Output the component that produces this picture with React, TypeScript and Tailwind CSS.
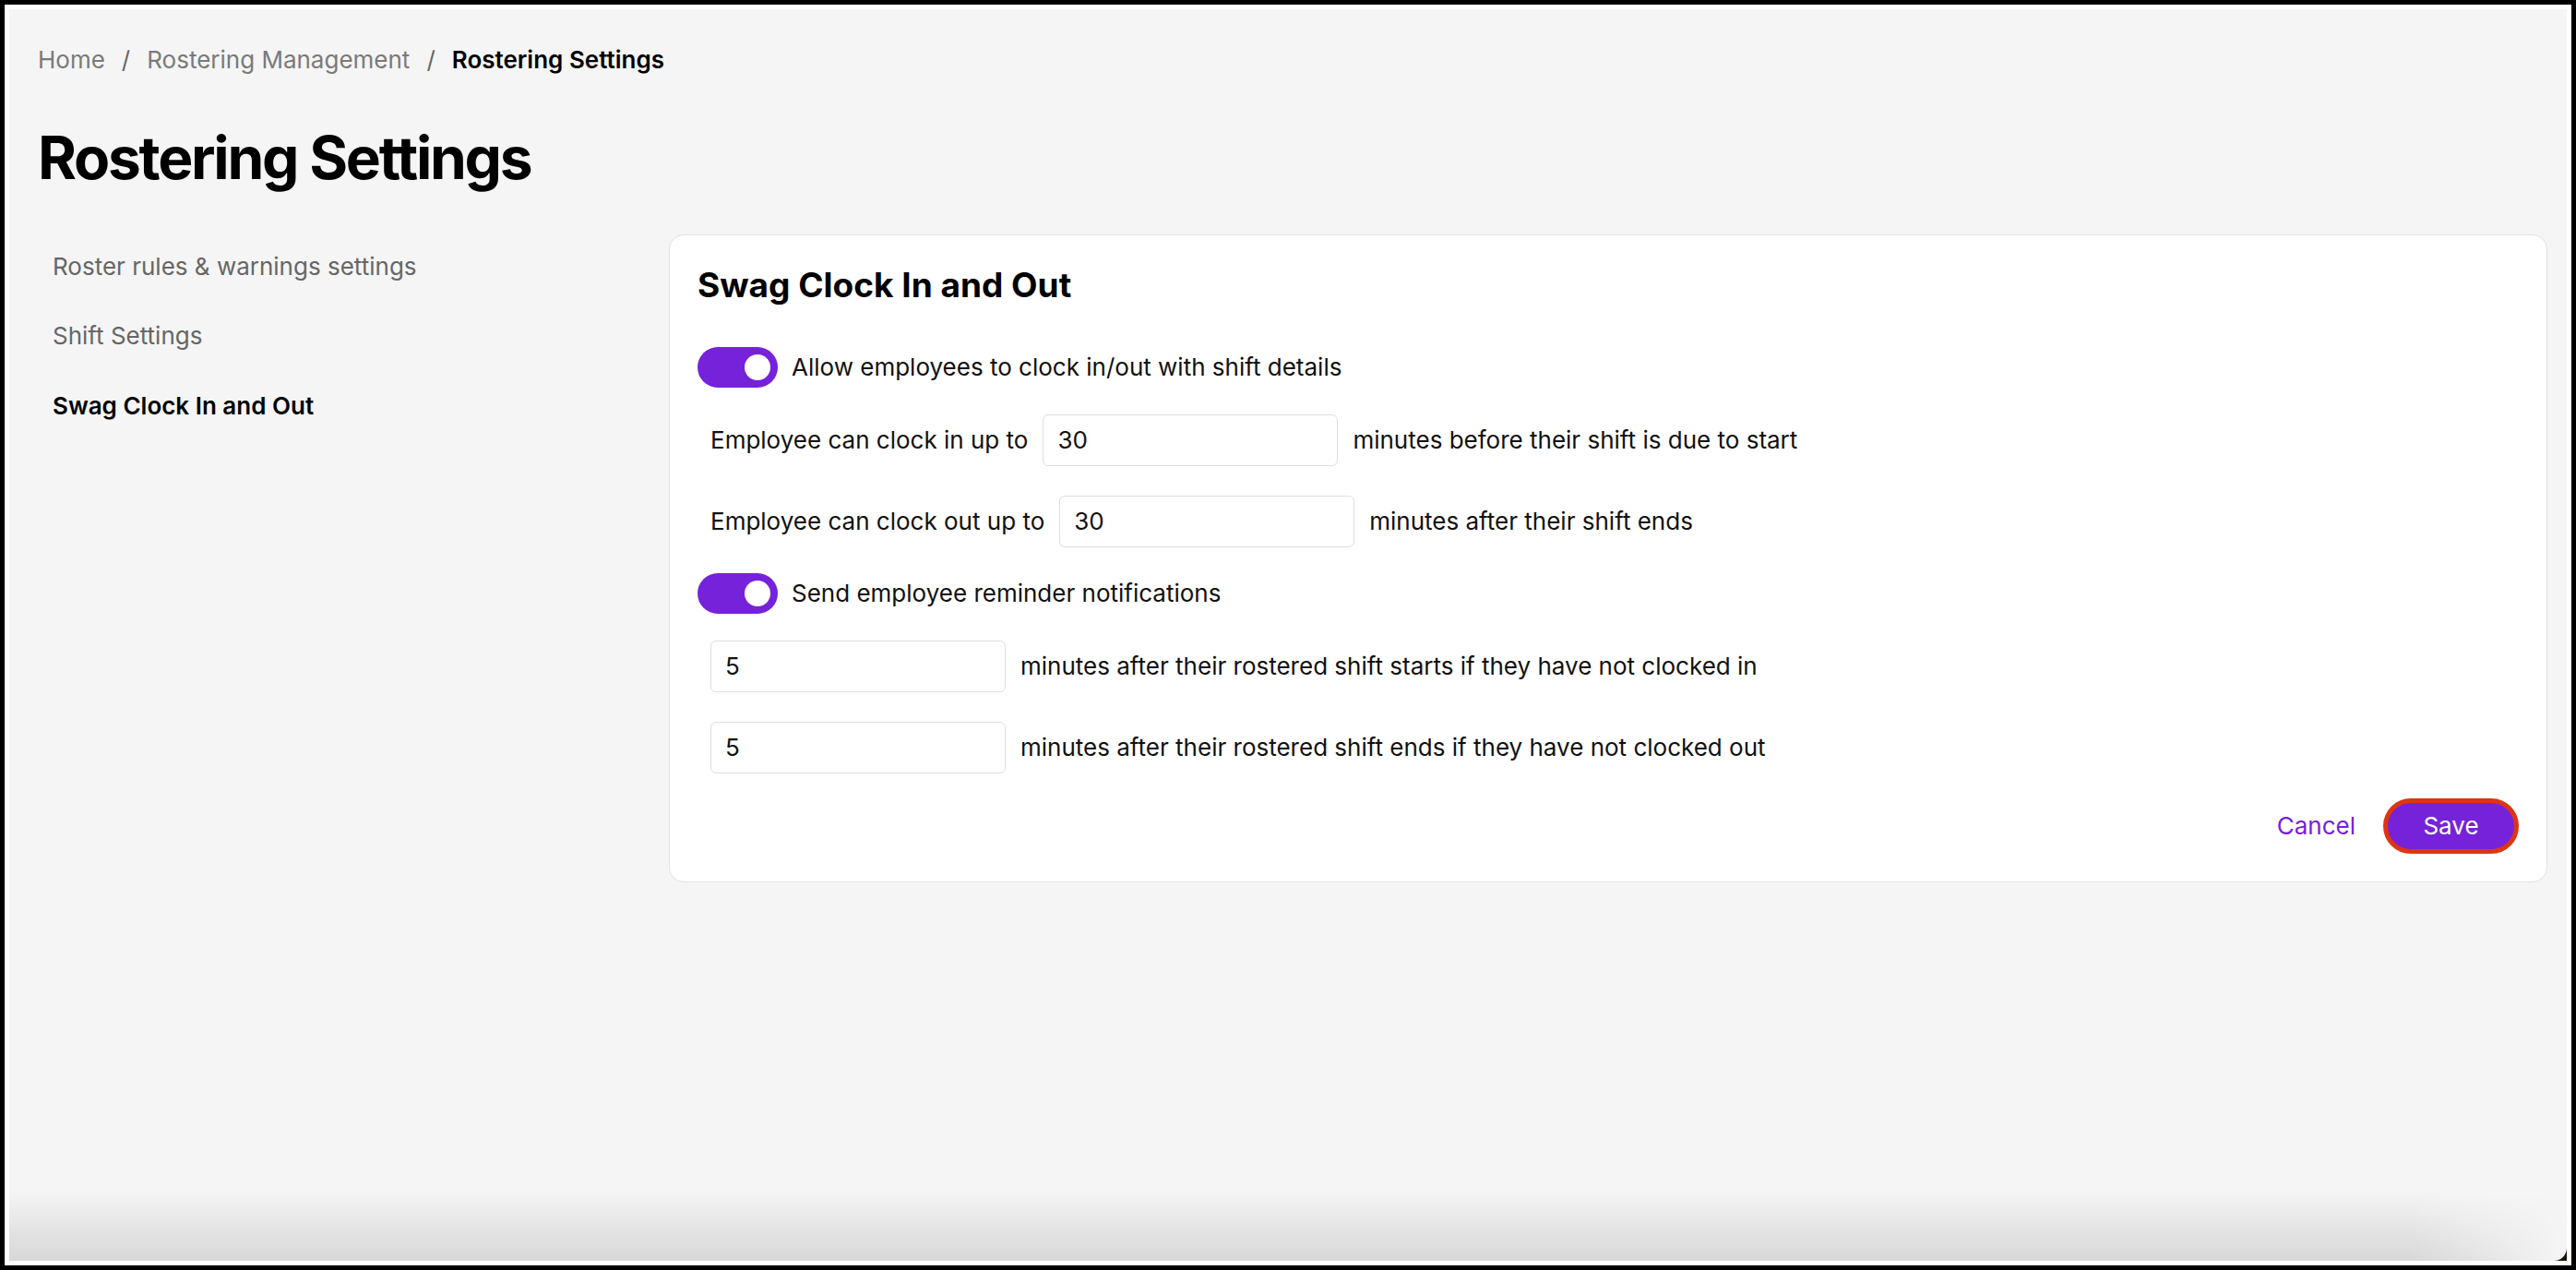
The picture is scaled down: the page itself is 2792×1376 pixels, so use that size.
const purple = "bg-[#7622da]";

function Toggle() {
  return (
    <span className={`relative inline-flex h-[44px] w-[87px] shrink-0 items-center justify-end rounded-full ${purple} pr-[8px]`}>
      <span className="h-[28px] w-[28px] rounded-full bg-white" />
    </span>
  );
}

function NumberBox({ value }: { value: string }) {
  return (
    <div className="flex h-[56px] w-[320px] shrink-0 items-center rounded-[6px] border border-[#dedede] bg-white px-[15px] text-[26px] text-[#111]">
      {value}
    </div>
  );
}

export default function App() {
  return (
    <div className="h-screen w-full bg-black p-[5px] font-['Inter','Liberation_Sans',sans-serif]">
      <div className="h-full w-full bg-white p-[5px]">
        <div className="h-full w-full bg-[#1b1408]">
          <div className="relative h-full w-full overflow-hidden rounded-br-[14px] bg-[#f5f5f5] pl-[31px] pr-[21px] pt-[38px]">
            {/* breadcrumb */}
            <nav className="flex items-center gap-[18px] text-[26px] leading-[34px] text-[#7a7a7a]">
              <span>Home</span>
              <span className="text-[#666]">/</span>
              <span>Rostering Management</span>
              <span className="text-[#666]">/</span>
              <span className="font-semibold text-black">Rostering Settings</span>
            </nav>

            <h1 className="mt-[51px] text-[64px] font-bold leading-[76px] tracking-[-0.035em] text-black">Rostering Settings</h1>

            <div className="mt-[45px] flex gap-[32px]">
              <aside className="-mt-[3px] w-[652px] shrink-0 text-[26px] leading-[34px]">
                <div className="flex h-[75px] items-center px-4 text-[#666]">Roster rules &amp; warnings settings</div>
                <div className="flex h-[75px] items-center px-4 text-[#666]">Shift Settings</div>
                <div className="flex h-[77px] items-center px-4 font-semibold text-black">Swag Clock In and Out</div>
              </aside>

              <section className="flex-1 rounded-[16px] border border-[#e2e2e2] bg-white px-[30px] pb-[30px] pt-[32px] text-[26px] leading-[34px] text-[#111]">
                <h2 className="text-[37px] font-bold leading-[44px] text-black">Swag Clock In and Out</h2>

                <div className="mt-[45px] flex flex-col">
                  <div className="flex items-center gap-[15px]">
                    <Toggle />
                    <span>Allow employees to clock in/out with shift details</span>
                  </div>
                  <div className="mt-[29px] flex items-center gap-4 pl-[14px]">
                    <span>Employee can clock in up to</span>
                    <NumberBox value="30" />
                    <span>minutes before their shift is due to start</span>
                  </div>
                  <div className="mt-[32px] flex items-center gap-4 pl-[14px]">
                    <span>Employee can clock out up to</span>
                    <NumberBox value="30" />
                    <span>minutes after their shift ends</span>
                  </div>
                  <div className="mt-[28px] flex items-center gap-[15px]">
                    <Toggle />
                    <span>Send employee reminder notifications</span>
                  </div>
                  <div className="mt-[29px] flex items-center gap-4 pl-[14px]">
                    <NumberBox value="5" />
                    <span>minutes after their rostered shift starts if they have not clocked in</span>
                  </div>
                  <div className="mt-[32px] flex items-center gap-4 pl-[14px]">
                    <NumberBox value="5" />
                    <span>minutes after their rostered shift ends if they have not clocked out</span>
                  </div>
                </div>

                <div className="mt-[27px] flex items-center justify-end gap-[30px]">
                  <button className="text-[26px] text-[#7622da]">Cancel</button>
                  <button className={`flex h-[60px] w-[147px] items-center justify-center rounded-full border-[5px] border-[#de3511] ${purple} text-[26px] text-white`}>
                    Save
                  </button>
                </div>
              </section>
            </div>

            <div className="pointer-events-none absolute inset-x-0 bottom-0 h-[76px] bg-gradient-to-b from-transparent to-black/[0.12] [mask-image:linear-gradient(to_left,transparent,black_170px)]" />
          </div>
        </div>
      </div>
    </div>
  );
}
